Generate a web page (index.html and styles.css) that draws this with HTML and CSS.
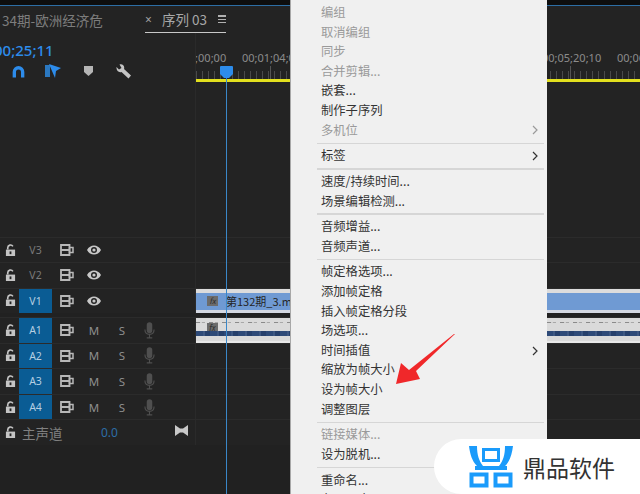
FILE: index.html
```html
<!DOCTYPE html>
<html>
<head>
<title>序列 03</title>
<link rel="stylesheet" href="styles.css">
</head>
<body>
<svg class="defs">
    <symbol id="lock" viewBox="0 0 12 14"><path d="M3 6V4a3 3 0 0 1 5.600-1.500" fill="none" stroke="currentColor" stroke-width="1.800"/><path d="M1 6h10v7H1z" fill="currentColor"/><rect x="5" y="8" width="2" height="3" fill="#232323"/></symbol>
    <symbol id="sync" viewBox="0 0 14 12"><path d="M1 1h8.500v10H1zM1 6h8.500" fill="none" stroke="currentColor" stroke-width="1.800"/><path d="M9.500 3.500h3.500v5H9.500z" fill="none" stroke="currentColor" stroke-width="1.500"/></symbol>
    <symbol id="eye" viewBox="0 0 14 10"><path d="M0 5c3-6 11-6 14 0c-3 6-11 6-14 0z" fill="currentColor"/><circle cx="7" cy="5" r="3" fill="#232323"/><circle cx="7" cy="5" r="1.600" fill="currentColor"/></symbol>
    <symbol id="mic" viewBox="0 0 12 18"><rect x="3" y="0" width="6" height="12" rx="3" fill="currentColor"/><path d="M1 8c0 7 10 7 10 0M6 14v3M3 17h6" fill="none" stroke="currentColor" stroke-width="1.200"/></symbol>
    <symbol id="chevron" viewBox="0 0 6 10"><path d="M1 1l4 4l-4 4" fill="none" stroke="currentColor" stroke-width="1.200"/></symbol>
</svg>

<div class="top-strip"></div>

<div class="tabs">
    <span class="tab-old">34期-欧洲经济危</span>
    <div class="tab-current">
        <span class="tab-close">×</span>
        <span class="tab-name">序列 03</span>
        <span class="tab-menu"></span>
    </div>
</div>

<div class="timeline-head">
    <div class="tool-side">
        <div class="timecode">00;25;11</div>
        <div class="tools">
            <svg width="13" height="13" viewBox="0 0 14 13"><path d="M2.500 13V7a4.500 4.500 0 0 1 9 0v6" fill="none" stroke="#2d8ceb" stroke-width="3.600"/></svg>
            <svg width="16" height="14" viewBox="0 0 16 14"><path d="M0 1h5v12H0z" fill="#2b78c0"/><path d="M4 0l12 4l-5 3l-1 7z" fill="#2d8ceb"/></svg>
            <svg class="tool-gap" width="9" height="10" viewBox="0 0 9 10"><path d="M0 0h9v6l-4.500 4l-4.500-4z" fill="#b5b5b5"/></svg>
            <svg class="tool-gap" width="16" height="15" viewBox="0 0 16 15"><path d="M0.500 3L3 5.500L5.500 4L3.500 0.500C6.500-0.500 9 2 8 5L15 11.500L12.500 14.500L5.500 8C3 9 0 7 0.500 3z" fill="#c4c4c4"/></svg>
        </div>
    </div>
    <div class="ruler">
        <div class="ruler-labels">
            <span class="first-label">00;00;00;00</span>
            <span>00;01;04;00</span>
            <span></span>
            <span></span>
            <span></span>
            <span>00;05;20;10</span>
            <span>00;06;24;12</span>
        </div>
        <div class="ruler-ticks"></div>
        <div class="work-area"></div>
    </div>
</div>

<div class="tracks video-tracks">
    <div class="track">
        <div class="head">
            <svg class="lock"><use href="#lock"/></svg><span class="target">V3</span>
            <svg class="sync"><use href="#sync"/></svg><svg class="eye"><use href="#eye"/></svg>
        </div>
        <div class="lane"></div>
    </div>
    <div class="track">
        <div class="head">
            <svg class="lock"><use href="#lock"/></svg><span class="target">V2</span>
            <svg class="sync"><use href="#sync"/></svg><svg class="eye"><use href="#eye"/></svg>
        </div>
        <div class="lane"></div>
    </div>
    <div class="track">
        <div class="head">
            <svg class="lock"><use href="#lock"/></svg><span class="target on">V1</span>
            <svg class="sync"><use href="#sync"/></svg><svg class="eye"><use href="#eye"/></svg>
        </div>
        <div class="lane">
            <div class="clip video-clip"><span class="fx">fx</span><span class="clip-name">第132期_3.mp4 [V]</span></div>
        </div>
    </div>
</div>

<div class="tracks audio-tracks">
    <div class="track">
        <div class="head">
            <svg class="lock"><use href="#lock"/></svg><span class="target on">A1</span>
            <svg class="sync"><use href="#sync"/></svg><span class="btn">M</span><span class="btn">S</span><svg class="mic"><use href="#mic"/></svg>
        </div>
        <div class="lane">
            <div class="clip audio-clip"><span class="fx">fx</span><div class="wave-top"></div><div class="wave-bottom"></div></div>
        </div>
    </div>
    <div class="track">
        <div class="head">
            <svg class="lock"><use href="#lock"/></svg><span class="target on">A2</span>
            <svg class="sync"><use href="#sync"/></svg><span class="btn">M</span><span class="btn">S</span><svg class="mic"><use href="#mic"/></svg>
        </div>
        <div class="lane"></div>
    </div>
    <div class="track">
        <div class="head">
            <svg class="lock"><use href="#lock"/></svg><span class="target on">A3</span>
            <svg class="sync"><use href="#sync"/></svg><span class="btn">M</span><span class="btn">S</span><svg class="mic"><use href="#mic"/></svg>
        </div>
        <div class="lane"></div>
    </div>
    <div class="track">
        <div class="head">
            <svg class="lock"><use href="#lock"/></svg><span class="target on">A4</span>
            <svg class="sync"><use href="#sync"/></svg><span class="btn">M</span><span class="btn">S</span><svg class="mic"><use href="#mic"/></svg>
        </div>
        <div class="lane"></div>
    </div>
    <div class="track">
        <div class="head">
            <svg class="lock"><use href="#lock"/></svg><span class="master-name">主声道</span><span class="master-value">0.0</span>
            <svg class="bowtie" width="13" height="11" viewBox="0 0 13 11"><path d="M0 0l5 3.500h3l5-3.500v11l-5-3.500h-3l-5 3.500z" fill="#c8c8c8"/></svg>
        </div>
        <div class="lane"></div>
    </div>
</div>

<!-- playhead sits over the ruler and the clips -->
<div class="playhead">
    <svg width="13" height="12" viewBox="0 0 13 12"><path d="M1 0h11a1 1 0 0 1 1 1v7l-4 4h-5l-4-4v-7a1 1 0 0 1 1-1z" fill="#2d8ceb"/></svg>
    <div class="playhead-line"></div>
</div>

<div class="menu">
    <div class="item off">编组</div>
    <div class="item off">取消编组</div>
    <div class="item off">同步</div>
    <div class="item off">合并剪辑...</div>
    <div class="item">嵌套...</div>
    <div class="item">制作子序列</div>
    <div class="item off">多机位<svg class="more"><use href="#chevron"/></svg></div>
    <div class="sep"></div>
    <div class="item">标签<svg class="more"><use href="#chevron"/></svg></div>
    <div class="sep"></div>
    <div class="item">速度/持续时间...</div>
    <div class="item">场景编辑检测...</div>
    <div class="sep"></div>
    <div class="item">音频增益...</div>
    <div class="item">音频声道...</div>
    <div class="sep"></div>
    <div class="item">帧定格选项...</div>
    <div class="item">添加帧定格</div>
    <div class="item">插入帧定格分段</div>
    <div class="item">场选项...</div>
    <div class="item">时间插值<svg class="more"><use href="#chevron"/></svg></div>
    <div class="item">缩放为帧大小</div>
    <div class="item">设为帧大小</div>
    <div class="item">调整图层</div>
    <div class="sep"></div>
    <div class="item off">链接媒体...</div>
    <div class="item">设为脱机...</div>
    <div class="sep"></div>
    <div class="item">重命名...</div>
    <div class="item">在项目中显示</div>
</div>

<svg class="red-arrow" width="64" height="54" viewBox="0 0 64 54"><path d="M60 0L21 37L25 45L1 50L6 29L14 36L59 0z" fill="#f0282a"/></svg>

<div class="badge">
    <svg width="44" height="42" viewBox="0 0 44 42">
        <path d="M0 0h8c0 9 2 15 6 20h-6c-5-5-7-12-8-20zM44 0h-8c0 9-2 15-6 20h6c5-5 7-12 8-20z" fill="#1a9bfb"/>
        <rect x="14.500" y="3.500" width="15" height="11" fill="none" stroke="#1a9bfb" stroke-width="3"/>
        <rect x="6" y="20" width="32" height="4" fill="#1a9bfb"/>
        <rect x="2.500" y="28.500" width="15" height="11" fill="none" stroke="#1a9bfb" stroke-width="4"/>
        <rect x="26.500" y="28.500" width="15" height="11" fill="none" stroke="#1a9bfb" stroke-width="4"/>
    </svg>
    <span class="badge-name">鼎品软件</span>
</div>
</body>
</html>
```

FILE: styles.css
```css
body {
    margin: 0;
    width: 640px;
    height: 494px;
    overflow: hidden;
    position: relative;
    background: #212121;
    font-family: "Noto Sans", "Noto Sans CJK SC", sans-serif;
    color: #8a8a8a;
}
.defs {
    display: none;
}

.top-strip {
    height: 5px;
    background: #0e0e0e;
    border-bottom: 1px solid #2d6ea5;
}

/* tabs */
.tabs {
    height: 27px;
    display: flex;
    background: #232323;
    padding-left: 2px;
    box-sizing: border-box;
}
.tab-old {
    width: 143px;
    font-size: 13.500px;
    line-height: 28px;
    color: #7d7d7d;
    font-family: "Noto Sans CJK SC", sans-serif;
}
.tab-current {
    width: 81px;
    height: 26px;
    display: flex;
    align-items: center;
    border-bottom: 1px solid #c8c8c8;
}
.tab-close {
    font-size: 12px;
    width: 17px;
    color: #a0a0a0;
}
.tab-name {
    font-size: 13.500px;
    color: #a8a8a8;
    width: 56px;
    font-family: "Noto Sans CJK SC", sans-serif;
}
.tab-menu {
    width: 8px;
    height: 9px;
    background: repeating-linear-gradient(#b0b0b0 0 1.500px, transparent 1.500px 3.500px);
}

/* timecode, tools and ruler */
.timeline-head {
    height: 204px;
    display: grid;
    grid-template-columns: 195px 1fr;
    background: #232323;
}
.tool-side {
    overflow: hidden;
}
.timecode {
    margin: 8px 0 0 -6px;
    font-size: 15px;
    line-height: 18px;
    font-weight: 500;
    color: #2d8ceb;
}
.tools {
    display: flex;
    align-items: center;
    height: 16px;
    margin-top: 4px;
    padding-left: 12px;
    gap: 20px;
}
.tool-gap {
    margin-left: 3px;
}
.ruler {
    overflow: hidden;
    padding-top: 18px;
    border-left: 1px solid #2a2a2a;
}
.ruler-labels {
    display: flex;
    height: 15px;
    font-size: 11px;
    line-height: 14px;
    white-space: nowrap;
    color: #8c8c8c;
}
.ruler-labels span {
    flex: 0 0 75px;
}
.ruler-labels .first-label {
    margin-left: -29px;
}
.ruler-ticks {
    height: 13px;
    background:
        repeating-linear-gradient(90deg, transparent 0 74px, #555 74px 75px),
        linear-gradient(#232323 40%, transparent 40%),
        repeating-linear-gradient(90deg, #4a4a4a 0 1px, transparent 1px 6px);
}
.work-area {
    height: 3px;
    background: #e2e01e;
}

/* tracks */
.track {
    display: grid;
    grid-template-columns: 195px 1fr;
    border-top: 1px solid #2b2b2b;
    box-sizing: border-box;
    background: #232323;
}
.video-tracks .track {
    height: 25.330px;
}
.audio-tracks {
    margin-top: 4px;
}
.audio-tracks .track {
    height: 25.600px;
}
.tracks:last-of-type .track:last-child {
    border-bottom: 1px solid #2b2b2b;
}
.head {
    display: flex;
    align-items: center;
    color: #bdbdbd;
    overflow: hidden;
}
.lane {
    border-left: 1px solid #2a2a2a;
    overflow: hidden;
    min-width: 0;
}
.lock {
    width: 11px;
    height: 13px;
    margin: 0 3px 0 5px;
    flex: none;
    color: #c4c4c4;
}
.target {
    width: 33px;
    height: 100%;
    flex: none;
    text-align: center;
    font-size: 10.500px;
    line-height: 25px;
    color: #7a7a7a;
}
.target.on {
    background: #0a5c94;
    color: #b5cfe2;
}
.sync {
    width: 14px;
    height: 12px;
    margin-left: 8px;
    flex: none;
    color: #b8b8b8;
}
.eye {
    width: 14px;
    height: 10px;
    margin-left: 13px;
    flex: none;
    color: #c8c8c8;
}
.btn {
    width: 28px;
    flex: none;
    text-align: center;
    font-size: 11.500px;
    color: #8e8e8e;
}
.target + .sync + .btn {
    margin-left: 6px;
}
.mic {
    width: 11px;
    height: 17px;
    margin-left: 8px;
    flex: none;
    color: #4f4f4f;
}
.master-name {
    width: 79px;
    margin-left: 3px;
    flex: none;
    font-size: 13.500px;
    line-height: 24px;
    color: #808080;
    font-family: "Noto Sans CJK SC", sans-serif;
}
.master-value {
    width: 74px;
    flex: none;
    font-size: 12px;
    color: #2d6ea8;
}
.bowtie {
    margin-top: -4px;
}

/* clips */
.clip {
    height: 25px;
    box-sizing: border-box;
    position: relative;
    overflow: hidden;
    white-space: nowrap;
}
.video-clip {
    background: #6f9ad3;
    border-top: 4px solid #dcdcdc;
    border-bottom: 4px solid #d4d8e2;
    font-size: 11px;
    color: #252525;
    display: flex;
    align-items: center;
    font-family: "Noto Sans CJK SC", sans-serif;
}
.fx {
    width: 11px;
    height: 10px;
    background: #6c6c6c;
    color: #2e2e2e;
    font-size: 8px;
    line-height: 10px;
    text-align: center;
    font-style: italic;
    margin-left: 11px;
    flex: none;
}
.clip-name {
    margin-left: 8px;
}
.audio-clip {
    background: #dadada;
    border-bottom: 2px solid #e8e8e8;
}
.audio-clip .fx {
    position: absolute;
    top: 5px;
    left: 0;
}
.wave-top {
    position: absolute;
    left: 0;
    right: 0;
    top: 4px;
    height: 1px;
    background: repeating-linear-gradient(90deg, #8a8a8a 0 4px, #d0d0d0 4px 6px, #a8a8a8 6px 9px, #dadada 9px 13px);
}
.wave-bottom {
    position: absolute;
    left: 0;
    right: 0;
    top: 13px;
    height: 5px;
    background: repeating-linear-gradient(90deg, #2e4a78 0 7px, #3d5782 7px 9px, #26406c 9px 14px);
}

/* things lying over the panel */
.playhead {
    position: absolute;
    left: 220px;
    top: 66px;
    bottom: 0;
    width: 13px;
}
.playhead svg {
    display: block;
}
.playhead-line {
    width: 1px;
    height: 100%;
    margin-left: 6px;
    background: #3a87c8;
}

.menu {
    position: absolute;
    left: 290px;
    top: 0;
    bottom: 0;
    width: 257px;
    padding-top: 3px;
    box-sizing: border-box;
    overflow: hidden;
    background: #f0f0f0;
    border-left: 1px solid #a8a8a8;
    font-family: "Noto Sans CJK SC", sans-serif;
    font-size: 12.300px;
}
.item {
    height: 19.600px;
    line-height: 19.600px;
    padding: 0 9px 0 30px;
    display: flex;
    justify-content: space-between;
    align-items: center;
    color: #333;
}
.item.off {
    color: #9a9a9a;
}
.more {
    width: 6px;
    height: 10px;
}
.sep {
    height: 1.400px;
    margin: 2.350px 3px 2.350px 26px;
    background: #d6d6d6;
}

.red-arrow {
    position: absolute;
    left: 395px;
    top: 334px;
}

.badge {
    position: absolute;
    left: 434px;
    top: 439px;
    right: 0;
    bottom: 0;
    padding: 7px 0 0 35px;
    box-sizing: border-box;
    background: #fff;
    border-radius: 30px 0 0 30px;
    display: flex;
    gap: 10px;
}
.badge-name {
    font-family: "Noto Sans CJK SC", sans-serif;
    font-size: 23px;
    line-height: 42px;
    color: #333;
}
```
